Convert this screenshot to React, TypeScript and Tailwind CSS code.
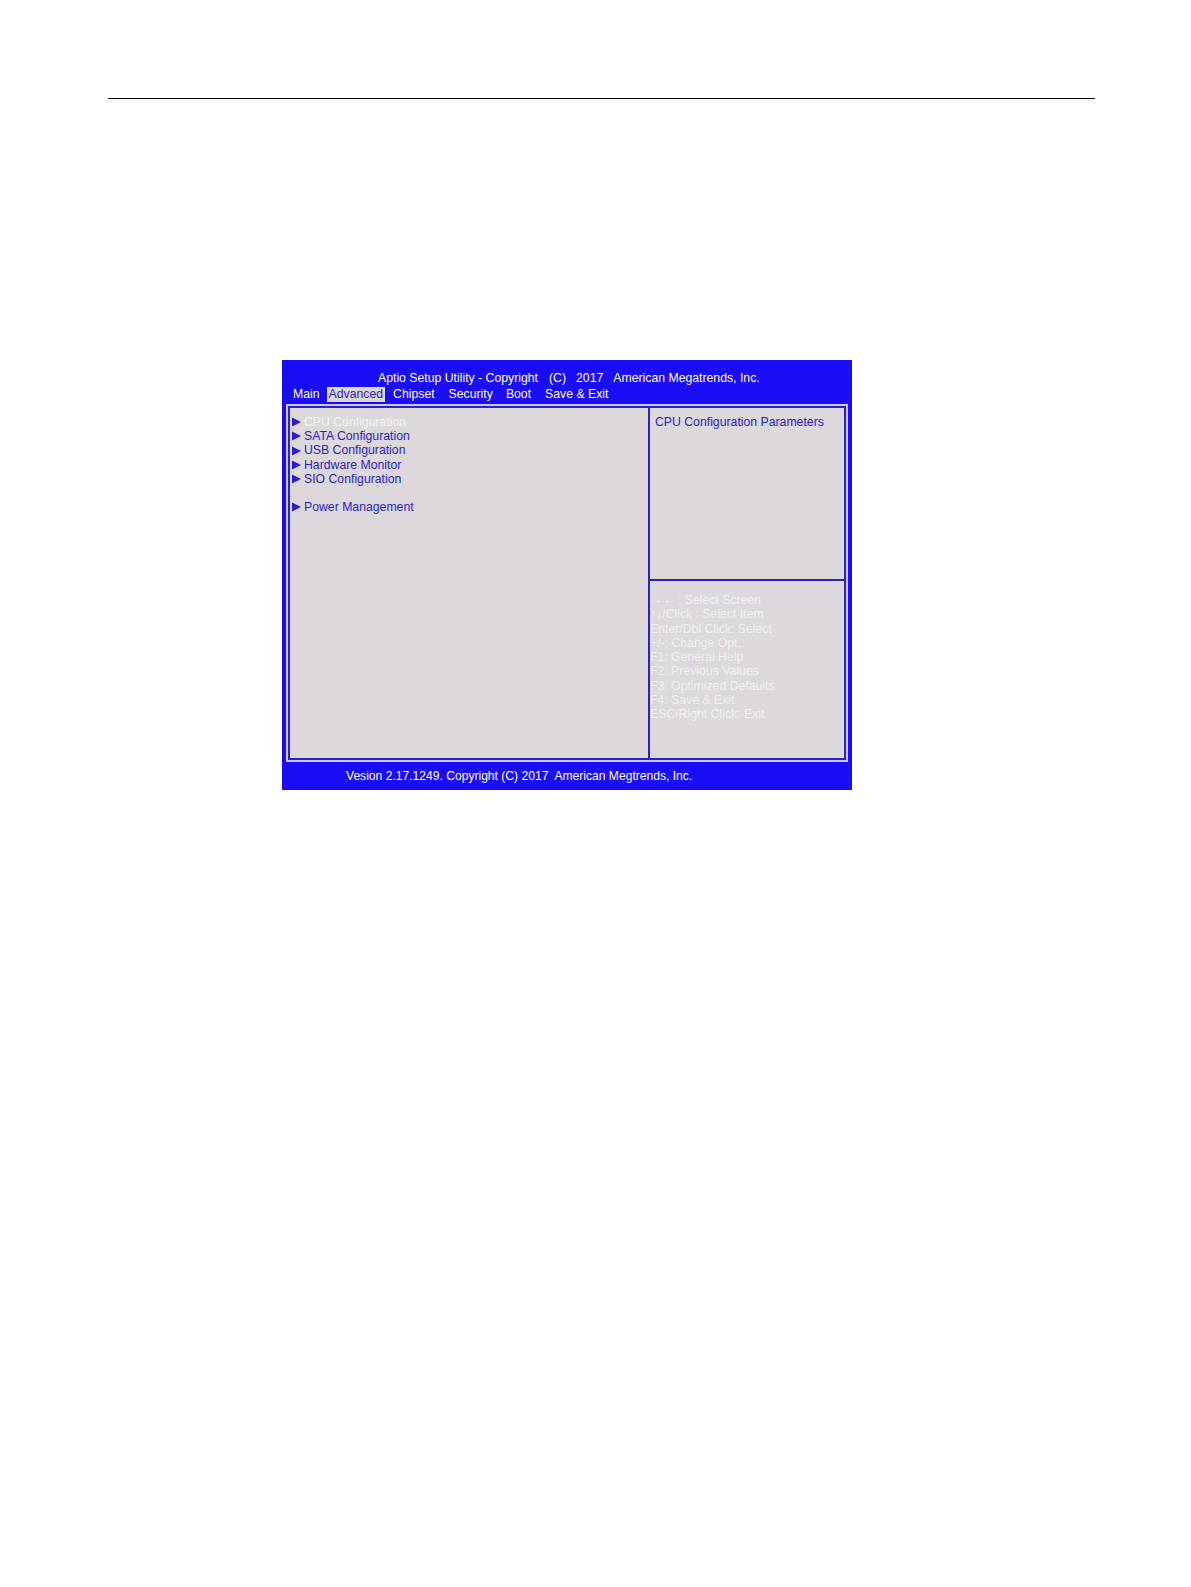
import React from "react";

const font = { fontFamily: '"Liberation Sans", Arial, sans-serif' };

const items: { label: string; selected?: boolean; gapBefore?: boolean }[] = [
  { label: "CPU Configuration", selected: true },
  { label: "SATA Configuration" },
  { label: "USB Configuration" },
  { label: "Hardware Monitor" },
  { label: "SIO Configuration" },
  { label: "Power Management", gapBefore: true },
];

const help = [
  "\u2192\u2190 : Select Screen",
  "\u2191\u2193/Click : Select Item",
  "Enter/Dbl Click: Select",
  "+/-: Change Opt.",
  "F1: General Help",
  "F2: Previous Values",
  "F3: Optimized Defaults",
  "F4: Save & Exit",
  "ESC/Right Click: Exit",
];

const tabs: { label: string; cls: string }[] = [
  { label: "Main", cls: "" },
  { label: "Advanced", cls: "ml-[7px] px-[2px] bg-[#dcd8dc] text-[#2a1fd0]" },
  { label: "Chipset", cls: "ml-[8px]" },
  { label: "Security", cls: "ml-[14px]" },
  { label: "Boot", cls: "ml-[13px]" },
  { label: "Save & Exit", cls: "ml-[14px]" },
];

function Arrow() {
  return (
    <svg width="9" height="10" viewBox="0 0 9 10" className="mr-[3px] shrink-0">
      <path d="M0 0.5 L9 5 L0 9.5 Z" fill="#2a1fd0" />
    </svg>
  );
}

export default function App() {
  return (
    <div className="min-h-[1587px] w-[1191px] bg-white" style={font}>
      <div className="h-[98px]" />
      <div className="ml-[108px] h-px w-[987px] bg-black" />
      <div className="h-[261px]" />

      <div className="ml-[282px] flex h-[430px] w-[570px] flex-col bg-[#1b0cf6]">
        <div className="mt-[10px] flex h-[16px] pl-[96px] text-[12.25px] leading-[16px] text-white">
          <span>Aptio Setup Utility - Copyright</span>
          <span className="ml-[11px]">(C)</span>
          <span className="ml-[10px]">2017</span>
          <span className="ml-[10px]">American Megatrends, Inc.</span>
        </div>
        <div className="flex h-[16px] items-center pl-[11px] text-[12.25px] leading-[15px] text-white">
          {tabs.map((t) => (
            <span key={t.label} className={t.cls}>
              {t.label}
            </span>
          ))}
        </div>

        <div className="mx-[4px] mt-[2px] flex h-[358px] border-2 border-[#c9c4f2]">
          <div className="flex flex-1 border-2 border-[#2c22c0] bg-[#dcd8dc]">
            <div className="w-[358px] pl-[2px] pt-[7px] text-[12.25px] leading-[14.2px] text-[#2a1fd0]">
              {items.map((it) => (
                <div key={it.label} className={["flex items-center", it.gapBefore ? "mt-[14.2px]" : ""].join(" ")}>
                  <Arrow />
                  <span className={it.selected ? "text-[#f4f2f6]" : ""}>{it.label}</span>
                </div>
              ))}
            </div>
            <div className="w-[2px] bg-[#2c22c0]" />
            <div className="flex flex-1 flex-col">
              <div className="h-[171px] pl-[5px] pt-[7px] text-[12.25px] leading-[14.2px] text-[#2a1fd0]">
                CPU Configuration Parameters
              </div>
              <div className="h-[2px] bg-[#2c22c0]" />
              <div className="pt-[12px] text-[12.25px] leading-[14.25px] text-[#f1eff3]">
                {help.map((h) => (
                  <div key={h} className="whitespace-pre">
                    {h}
                  </div>
                ))}
              </div>
            </div>
          </div>
        </div>

        <div className="flex flex-1 items-center pl-[64px] text-[12.1px] text-white">
          <span className="whitespace-pre">Vesion 2.17.1249. Copyright (C) 2017  American Megtrends, Inc.</span>
        </div>
      </div>
    </div>
  );
}
